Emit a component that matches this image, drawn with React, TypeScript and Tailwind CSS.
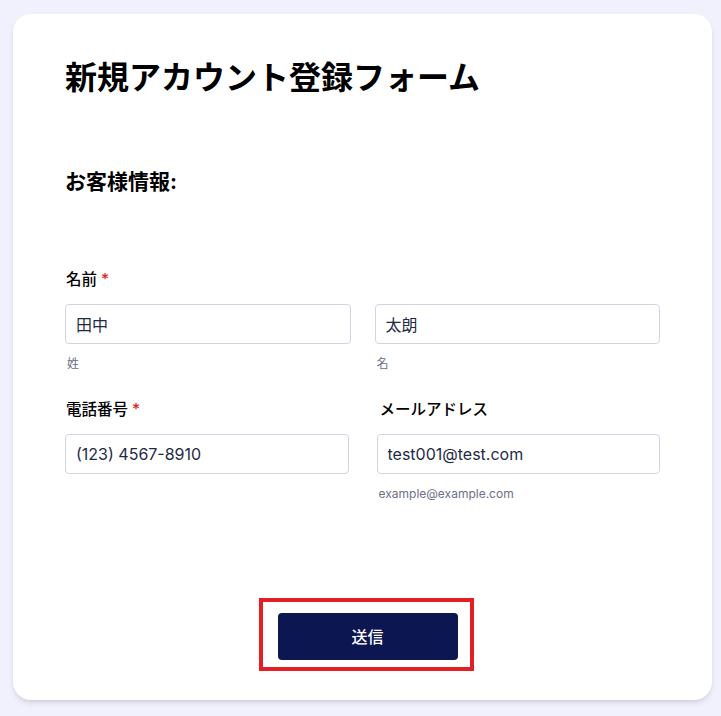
const font = "font-['Inter','Noto_Sans_CJK_JP',sans-serif]";

function Field({
  label,
  required,
  value,
  hint,
  className,
}: {
  label?: string;
  required?: boolean;
  value: string;
  hint?: string;
  className?: string;
}) {
  return (
    <div className={className}>
      <div className="h-5 pl-[1px] text-[15.5px] leading-5 font-medium text-black">
        {label}
        {required && <span className="ml-1 text-[#dc2626]">*</span>}
      </div>
      <input
        readOnly
        value={value}
        className="mt-[14px] block h-10 w-full rounded-[4px] border border-[#d1d5e3] px-[10px] text-[16px] text-[#1f2a44] outline-none"
      />
      {hint && <div className="mt-[12px] pl-[2px] text-[12px] leading-4 text-[#6b7088]">{hint}</div>}
    </div>
  );
}

export default function App() {
  return (
    <div className={`min-h-[716px] bg-[#f0f1fc] pt-[14px] ${font}`}>
      <div className="ml-[13px] w-[699px] rounded-[18px] bg-white px-[52px] pt-[44px] pb-[29px] shadow-md">
        <h1 className="text-[32px] leading-10 font-bold text-black">新規アカウント登録フォーム</h1>
        <h2 className="mt-[70px] text-[21px] leading-7 font-bold text-black">お客様情報:</h2>

        <div className="mt-[74px] grid grid-cols-2 gap-x-6">
          <Field label="名前" required value="田中" hint="姓" />
          <Field value="太朗" hint="名" />
        </div>

        <div className="mt-[28px] grid grid-cols-2 gap-x-7">
          <Field label="電話番号" required value="(123) 4567-8910" />
          <Field label="メールアドレス" value="test001@test.com" hint="example@example.com" className="[&>div:first-child]:pl-[3px]" />
        </div>

        <div className="mt-[96px] flex justify-center pl-[7px]">
          <div className="border-4 border-[#e31e24] pt-[11px] pr-[12px] pb-[7px] pl-[15px]">
            <button className="h-[47px] w-[180px] rounded-[4px] bg-[#0c1650] text-[16px] font-medium text-white">
              送信
            </button>
          </div>
        </div>
      </div>
    </div>
  );
}
